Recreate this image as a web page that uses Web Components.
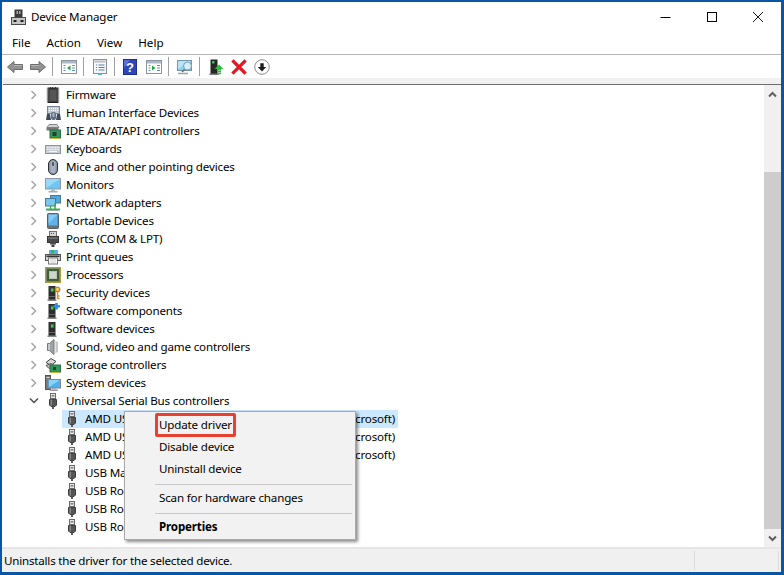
<!DOCTYPE html>
<html><head><meta charset="utf-8"><title>Device Manager</title>
<style>
html,body{margin:0;padding:0;background:#0a55a6;}
body{width:784px;height:575px;overflow:hidden;font-family:"Noto Sans","Open Sans",sans-serif;font-size:11.6px;letter-spacing:-.17px;color:#000;}
</style></head><body>
<dm-window>
  <dm-titlebar>Device Manager</dm-titlebar>
  <dm-menubar><dm-menu>File</dm-menu><dm-menu>Action</dm-menu><dm-menu>View</dm-menu><dm-menu>Help</dm-menu></dm-menubar>
  <dm-toolbar></dm-toolbar>
  <dm-tree>
    <dm-row icon="firmware">Firmware</dm-row>
    <dm-row icon="hid">Human Interface Devices</dm-row>
    <dm-row icon="ide">IDE ATA/ATAPI controllers</dm-row>
    <dm-row icon="keyboard">Keyboards</dm-row>
    <dm-row icon="mouse">Mice and other pointing devices</dm-row>
    <dm-row icon="monitor">Monitors</dm-row>
    <dm-row icon="network">Network adapters</dm-row>
    <dm-row icon="portable">Portable Devices</dm-row>
    <dm-row icon="ports">Ports (COM &amp; LPT)</dm-row>
    <dm-row icon="printer">Print queues</dm-row>
    <dm-row icon="cpu">Processors</dm-row>
    <dm-row icon="security">Security devices</dm-row>
    <dm-row icon="softcomp">Software components</dm-row>
    <dm-row icon="softdev">Software devices</dm-row>
    <dm-row icon="sound">Sound, video and game controllers</dm-row>
    <dm-row icon="storage">Storage controllers</dm-row>
    <dm-row icon="system">System devices</dm-row>
    <dm-row icon="usb" state="open">Universal Serial Bus controllers</dm-row>
    <dm-row icon="usb" level="1" selected wide><span>AMD USB 3.10 eXtensible Host</span><span>Controller - 1.10 (Microsoft)</span></dm-row>
    <dm-row icon="usb" level="1" wide><span>AMD USB 3.10 eXtensible Host</span><span>Controller - 1.10 (Microsoft)</span></dm-row>
    <dm-row icon="usb" level="1" wide><span>AMD USB 3.10 eXtensible Host</span><span>Controller - 1.10 (Microsoft)</span></dm-row>
    <dm-row icon="usb" level="1">USB Mass Storage Device</dm-row>
    <dm-row icon="usb" level="1">USB Root Hub</dm-row>
    <dm-row icon="usb" level="1">USB Root Hub</dm-row>
    <dm-row icon="usb" level="1">USB Root Hub</dm-row>
  </dm-tree>
  <dm-statusbar>Uninstalls the driver for the selected device.</dm-statusbar>
  <dm-contextmenu>
    <dm-item highlighted>Update driver</dm-item>
    <dm-item>Disable device</dm-item>
    <dm-item>Uninstall device</dm-item>
    <dm-sep></dm-sep>
    <dm-item>Scan for hardware changes</dm-item>
    <dm-sep></dm-sep>
    <dm-item bold>Properties</dm-item>
  </dm-contextmenu>
</dm-window>
<script>
const tower='<rect x="3.5" y="1" width="7" height="14" fill="#2c2c2c"/><rect x="4.5" y="2" width="5" height="5" fill="#3a3a3a"/><rect x="6" y="3.5" width="2.5" height="3" fill="#35d04a"/><rect x="4" y="11" width="6" height="1" fill="#666"/><rect x="2.5" y="14.5" width="9" height="1.5" fill="#888"/>';
const usbIcon='<rect x="5.5" y="0.5" width="5" height="5" fill="#e8e8e8" stroke="#6a6a6a"/><rect x="6.7" y="2" width="1" height="1.6" fill="#555"/><rect x="8.3" y="2" width="1" height="1.6" fill="#555"/><path d="M4.5 6.5h7v5.5l-1.5 1.5h-4l-1.5-1.5z" fill="#555" stroke="#3d3d3d"/><rect x="5.5" y="6.5" width="1.5" height="6" fill="#888"/><rect x="7" y="13.5" width="2" height="2.5" fill="#5a5a5a"/>';
const ICONS={
firmware:'<rect x="3" y="1" width="10" height="14.5" fill="#3c3c3c" stroke="#222"/><rect x="4.500" y="3" width="7" height="11" fill="#555"/><path d="M1.500 2h2M1.500 4h2M1.500 6h2M1.500 8h2M1.500 10h2M1.500 12h2M1.500 14h2M12.500 2h2M12.500 4h2M12.500 6h2M12.500 8h2M12.500 10h2M12.500 12h2M12.500 14h2" stroke="#999" fill="none"/><path d="M5 .5h1M7 .5h1M10 .5h1" stroke="#333"/>',
hid:'<rect x="2.500" y="1.500" width="12" height="7" fill="#c4cad2" stroke="#7b8591"/><path d="M4 3.500h9M4 5.500h9" stroke="#fff" stroke-dasharray="1 1"/><path d="M1 15l1-6h3l1 6zM11 15l1-6h3l1 6z" fill="#3f4a5c"/><rect x="6" y="7" width="5" height="8" fill="#5f6f87" rx="2"/><rect x="7.500" y="8" width="2" height="4" fill="#aab6c6"/>',
ide:'<path d="M2 4.500l2-3h8l2 3z" fill="#cfd3d6" stroke="#8a8a8a"/><rect x="1.500" y="4.500" width="12" height="3" fill="#777"/><rect x="5" y="7" width="10.500" height="8" fill="#2e9b57" stroke="#2f6e49"/><rect x="7.500" y="9" width="4" height="4" fill="#2f3b36"/><path d="M5.500 15.500h9" stroke="#d6b340"/>',
keyboard:'<rect x="0.500" y="4.500" width="15" height="8" fill="#c9ced4" stroke="#8c949c"/><path d="M2 6.500h12M2 8.500h12" stroke="#f3f5f7" stroke-dasharray="1 .6"/><path d="M4 10.500h8" stroke="#f3f5f7"/>',
mouse:'<rect x="3.500" y="0.500" width="9" height="15" rx="4.500" fill="#8a96a6" stroke="#2f3338"/><rect x="5.500" y="2" width="5" height="12" rx="2.500" fill="#a9b3c0"/><rect x="7.200" y="3" width="1.600" height="4" rx=".8" fill="#3a3f46"/>',
monitor:'<rect x="0.500" y="1.500" width="15" height="10.500" fill="#6fc6f2" stroke="#8e9aa4"/><path d="M1 2h14L1 11z" fill="#9adaf8"/><rect x="6" y="12" width="4" height="2" fill="#b3bcc4"/><rect x="3.500" y="14" width="9" height="1.500" fill="#a4adb5"/>',
network:'<rect x="5.500" y="0.500" width="10" height="7.500" fill="#4ea9dc" stroke="#4a7a99"/><rect x="0.500" y="3.500" width="10" height="7.500" fill="#79c6ee" stroke="#4a7a99"/><path d="M1 14.500h14" stroke="#36b24a" stroke-width="2"/><path d="M5.500 11v3M10 8v6" stroke="#36b24a" stroke-width="1.500"/><path d="M3 15.500h10" stroke="#9aa" />',
portable:'<rect x="2.500" y="0.500" width="11" height="15" rx="1" fill="#6b7075" stroke="#5a5f64"/><rect x="3.500" y="1.500" width="9" height="11" fill="#5db3ec"/><path d="M3.500 1.500h9l-9 9z" fill="#85cbf4"/>',
ports:'<rect x="4.500" y="0.500" width="7" height="5" fill="#d6d6d6" stroke="#707070"/><path d="M6 2.500h4" stroke="#555" stroke-dasharray="1 1"/><rect x="2.500" y="5.500" width="11" height="6" fill="#4b4b4b" stroke="#333"/><rect x="3" y="6.500" width="10" height="1" fill="#888"/><rect x="5" y="11.500" width="6" height="2" fill="#555"/><rect x="6.500" y="13.500" width="3" height="2.500" fill="#444"/>',
printer:'<rect x="4" y="1" width="9" height="5" fill="#5bb0e4"/><rect x="6" y="1" width="3" height="3" fill="#39b54a"/><rect x="0.500" y="5.500" width="15" height="6" fill="#d2d2d2" stroke="#555"/><rect x="1.500" y="6.500" width="13" height="1.500" fill="#333"/><rect x="3.500" y="9" width="9" height="6" fill="#fff" stroke="#777"/><path d="M5 11h6M5 13h6" stroke="#ccc"/>',
cpu:'<rect x="0.500" y="0.500" width="15" height="15" fill="#7c8a5a" stroke="#b79a3b"/><rect x="2" y="2" width="12" height="12" fill="#3f5d3f"/><rect x="4" y="4" width="8" height="8" fill="#b7c6b3"/><path d="M5 5h6v6H5z" fill="#cdd8ca"/>',
security:tower+'<circle cx="12.500" cy="4.500" r="2.500" fill="#e6b13c" stroke="#a87a18"/><circle cx="12.500" cy="4" r=".8" fill="#fff"/><path d="M12.500 7v7M12.500 11h2M12.500 13.500h2" stroke="#c8932a" stroke-width="1.400" fill="none"/>',
softcomp:tower+'<path d="M11.500 0v6.500M8.500 3.250h6.500" stroke="#2d8fe0" stroke-width="2.600"/>',
softdev:tower,
sound:'<path d="M9 .5v15L4.500 11.500H2.500v-7h2z" fill="#9ea3a8" stroke="#75797d"/><rect x="3" y="5" width="2" height="6" fill="#c6c9cc"/><path d="M10.500 1.500l2.500 2v9l-2.500 2z" fill="#c5c8cb"/>',
storage:'<path d="M1 5.500L6 1.500l5 3-5 4z" fill="#d8d8d8" stroke="#444"/><path d="M1 8.500l5-2 3 2-5 3z" fill="#bdbdbd" stroke="#555"/><rect x="5" y="8" width="10.500" height="7" fill="#2e9b57" stroke="#2f6e49"/><rect x="8" y="10" width="3" height="3" fill="#2f3b36"/><path d="M5.500 15.500h9" stroke="#d6b340"/>',
system:'<rect x="0.500" y="0.500" width="5" height="14" fill="#777" stroke="#555"/><rect x="1.500" y="2" width="3" height="1" fill="#ddd"/><rect x="3" y="4.500" width="12.500" height="8.500" fill="#4fb2ea" stroke="#7b8791"/><path d="M4 5h11L4 12z" fill="#8ad2f6"/><rect x="7" y="13" width="4" height="1.500" fill="#aab"/><rect x="5" y="14.500" width="8" height="1.500" fill="#99a"/>',
usb:usbIcon,
app:'<rect x="4.500" y="0.500" width="8" height="8" fill="#3a3a3a"/><rect x="6.500" y="2" width="1.500" height="3" fill="#aaa"/><rect x="9" y="2" width="1.500" height="3" fill="#aaa"/><rect x="1.500" y="8.500" width="14" height="7" fill="#c4c4c4" stroke="#4a4a4a"/><rect x="3.500" y="11" width="3" height="2" fill="#222"/><rect x="10.500" y="11" width="3" height="2" fill="#222"/>',
back:'<path d="M0.500 8L7 2.500V5.500h8.500v5H7v3z" fill="#929292" stroke="#6b6b6b"/><path d="M7 6.500h8" stroke="#b5b5b5"/>',
fwd:'<path d="M15.500 8L9 2.500V5.500H0.500v5H9v3z" fill="#929292" stroke="#6b6b6b"/><path d="M1 6.500h8" stroke="#b5b5b5"/>',
panelL:'<rect x="0.500" y="1.500" width="15" height="13" fill="#fff" stroke="#8a94a0"/><rect x="1" y="2" width="14" height="2.500" fill="#aeb8c4"/><path d="M9.500 6.500L6 9l3.500 2.500z" fill="#2ea043"/><path d="M2.500 6.500h2M2.500 9h2M2.500 11.500h2M11 6.500h3M11 9h3M11 11.500h3" stroke="#5a8fc4"/>',
props:'<rect x="1.500" y="0.500" width="13" height="14" fill="#f4f6f8" stroke="#8a8f96"/><rect x="2.500" y="1.500" width="11" height="2" fill="#b9bfc7"/><path d="M4 6h1M6.500 6h6M4 8.500h1M6.500 8.500h6M4 11h1M6.500 11h6" stroke="#5a7fa8"/><rect x="6" y="14.500" width="4" height="1.500" fill="#55b5e8"/>',
help:'<rect x="0.500" y="0.500" width="13" height="15" fill="#2f46b8" stroke="#1e2f86"/><path d="M1 1h6L1 9z" fill="#5a70d8"/><text x="7" y="12.500" text-anchor="middle" font-family="Liberation Sans" font-weight="700" font-size="13" fill="#fff">?</text>',
panelR:'<rect x="0.500" y="1.500" width="15" height="13" fill="#fff" stroke="#8a94a0"/><rect x="1" y="2" width="14" height="2.500" fill="#aeb8c4"/><path d="M6 6.500L9.500 9 6 11.500z" fill="#2ea043"/><path d="M2.500 6.500h2M2.500 9h2M2.500 11.500h2M11 6.500h3M11 9h3M11 11.500h3" stroke="#5a8fc4"/>',
scan:'<rect x="0.500" y="1.500" width="14" height="10" fill="#8fd0f2" stroke="#6f96ad"/><path d="M1 2h13L1 10z" fill="#b8e3f8"/><circle cx="10.500" cy="7" r="4" fill="#d4eefb" stroke="#7d9aab"/><path d="M7.500 10.500L5 13" stroke="#666" stroke-width="1.500"/><path d="M1 14.500h10" stroke="#9aa5ad" stroke-width="1.500"/>',
update:'<rect x="2.500" y="0.500" width="7" height="14.500" fill="#262626"/><rect x="4" y="2" width="2.500" height="2.500" fill="#35c24a"/><rect x="1.500" y="14.500" width="9" height="1.500" fill="#777"/><path d="M11 5.500l4.500 4.500H13v1.500H9V10H6.500z" fill="#2ebd3c"/><path d="M9 12.500h4M9 14.500h4" stroke="#2ebd3c" stroke-width="1.300"/>',
remove:'<path d="M2.500 2.500l11 11M13.500 2.500l-11 11" stroke="#e01a22" stroke-width="3.200" stroke-linecap="square"/>',
down:'<circle cx="8" cy="8" r="7.300" fill="#fff" stroke="#8d8d8d"/><path d="M8 12.500L3.800 8H6.300V4.300h3.400V8h2.500z" fill="#1d1d1d"/>'
};
function def(name,css,html,extra){
  customElements.define(name,class extends HTMLElement{
    constructor(){super();this.attachShadow({mode:'open'}).innerHTML='<style>'+css+'</style>'+(html||'<slot></slot>');}
    connectedCallback(){if(extra)extra(this);}
  });
}
const svg=(n,s=16)=>`<svg width="${s}" height="${s}" viewBox="0 0 16 16" style="display:block;flex:none">${ICONS[n]}</svg>`;

def('dm-window',':host{display:flex;flex-direction:column;position:relative;box-sizing:border-box;width:784px;height:575px;padding:2px 3px 3px 2px;}.in{display:flex;flex-direction:column;flex:1;background:#fff;min-height:0}','<div class="in"><slot></slot></div>');

def('dm-titlebar',`:host{display:flex;align-items:center;height:30px;background:#fff;flex:none}
.i{margin:-1px 5px 0 8px}.t{flex:1;padding-bottom:1px;letter-spacing:-.1px}
.b{width:45.500px;height:30px;display:flex;align-items:center;justify-content:center}`,
`<div class="i">${svg('app',16)}</div><div class="t"><slot></slot></div>
<div class="b"><svg width="12" height="12" viewBox="0 0 12 12" style="margin-left:-2px;margin-top:-1px"><path d="M.5 6.500h10" stroke="#000" fill="none"/></svg></div>
<div class="b"><svg width="12" height="12" viewBox="0 0 12 12" style="margin-left:-2px;margin-top:-1px"><rect x="1.500" y="1.500" width="9" height="9" fill="none" stroke="#000"/></svg></div>
<div class="b"><svg width="12" height="12" viewBox="0 0 12 12" style="margin-top:-1px"><path d="M1 1l10 10M11 1L1 11" stroke="#000" fill="none" stroke-width=".9"/></svg></div>`);

def('dm-menubar',':host{display:flex;height:22px;align-items:center;padding-left:2px;border-bottom:1px solid #b5b5b5;flex:none;letter-spacing:0}');
def('dm-menu',':host{display:block;padding:0 8px 2px;}');

const tb=['back','fwd','|','panelL','|','props','|','help','panelR','|','scan','|','update','remove','down'];
def('dm-toolbar',`:host{display:flex;align-items:center;height:23px;padding-left:2px;flex:none;background:#fff}
.b{width:23px;height:23px;box-sizing:border-box;padding-left:3px;display:flex;align-items:center}
.s{width:8px;height:23px;display:flex;align-items:center;padding-left:2px;box-sizing:border-box}.s i{display:block;width:1px;height:19px;background:#a0a0a0}`,
tb.map(n=>n==='|'?'<div class="s"><i></i></div>':`<div class="b">${svg(n)}</div>`).join(''));

def('dm-tree',`:host{display:flex;flex:1;min-height:0;margin-left:1px;position:relative;border-top:1px solid #6d6d6d;box-shadow:0 -6px 0 #f0f0f0;margin-top:6px}
.r{flex:1;padding-top:1px;overflow:hidden;min-width:0;background:#fff}
.sb{width:17px;display:flex;flex-direction:column;background:#f0f0f0;flex:none}
.btn{height:18px;display:flex;align-items:center;justify-content:center;flex:none}
.tr{height:69px;flex:none}.th{flex:1;background:#cdcdcd}`,
`<div class="r"><slot></slot></div><div class="sb">
<div class="btn"><svg width="9" height="7" viewBox="0 0 9 7"><path d="M1 5.500L4.500 2 8 5.500" fill="none" stroke="#606060" stroke-width="2"/></svg></div>
<div class="tr"></div><div class="th"></div>
<div class="btn"><svg width="9" height="7" viewBox="0 0 9 7"><path d="M1 1.500L4.500 5 8 1.500" fill="none" stroke="#606060" stroke-width="2"/></svg></div></div>`);

def('dm-row',`:host{display:flex;align-items:center;height:18px;box-sizing:border-box;padding-left:23px;white-space:nowrap}
:host([level="1"]){padding-left:59px}
:host([wide]) .c{width:336px;box-sizing:border-box}
:host([selected]) .c{background:#cce8ff}
.ch{width:16px;height:18px;display:flex;align-items:center;justify-content:center;margin-right:3px;flex:none}
:host([level="1"]) .ch{display:none}
.c{display:flex;align-items:center;height:18px;flex:none;padding-right:3px}
:host([level="1"]) .c{padding-left:2px}
.l{margin-left:5px;flex:1;display:flex;justify-content:space-between;min-width:0;padding-bottom:2px}`,
`<div class="ch"></div><div class="c"><span class="i"></span><div class="l"><slot></slot></div></div>`,
el=>{
  const r=el.shadowRoot;
  r.querySelector('.i').innerHTML=svg(el.getAttribute('icon'));
  r.querySelector('.ch').innerHTML=el.getAttribute('state')==='open'
   ?'<svg width="10" height="8" viewBox="0 0 10 8"><path d="M1 1.500L5 5.500 9 1.500" fill="none" stroke="#4d4d4d" stroke-width="1.500"/></svg>'
   :'<svg width="8" height="10" viewBox="0 0 8 10"><path d="M1.500 1L5.500 5 1.500 9" fill="none" stroke="#a6a6a6" stroke-width="1.500"/></svg>';
});

def('dm-statusbar',`:host{display:flex;height:23px;flex:none;border-top:2px solid #e6e6e6;background:#f0f0f0;align-items:center;letter-spacing:-.21px}
.t{flex:1;padding-left:2px;padding-bottom:1px}.c{width:85px;height:19px;border-left:1px solid #dcdcdc;border-right:1px solid #dcdcdc;box-sizing:border-box;margin-right:2px}`,
'<div class="t"><slot></slot></div><div class="c"></div>');

def('dm-contextmenu',`:host{position:absolute;left:124px;top:411px;width:232px;height:129px;box-sizing:border-box;padding:3px 2px 2px;background:#f2f2f2;border:1px solid #a8a8a8;box-shadow:2px 2px 3px rgba(0,0,0,.45);display:block}`);
def('dm-item',`:host{display:flex;align-items:center;height:22px;box-sizing:border-box;padding:0 0 4px 32px;position:relative}
:host([bold]){font-weight:700}
:host([highlighted])::after{content:"";position:absolute;left:27.500px;top:-2px;width:81.500px;height:24px;box-sizing:border-box;border:3px solid #e8412f;border-radius:2px}`);
def('dm-sep',':host{display:block;height:7px;position:relative}:host::after{content:"";position:absolute;left:28px;right:1px;top:3px;height:1px;background:#c8c8c8}');
</script>
</body></html>
